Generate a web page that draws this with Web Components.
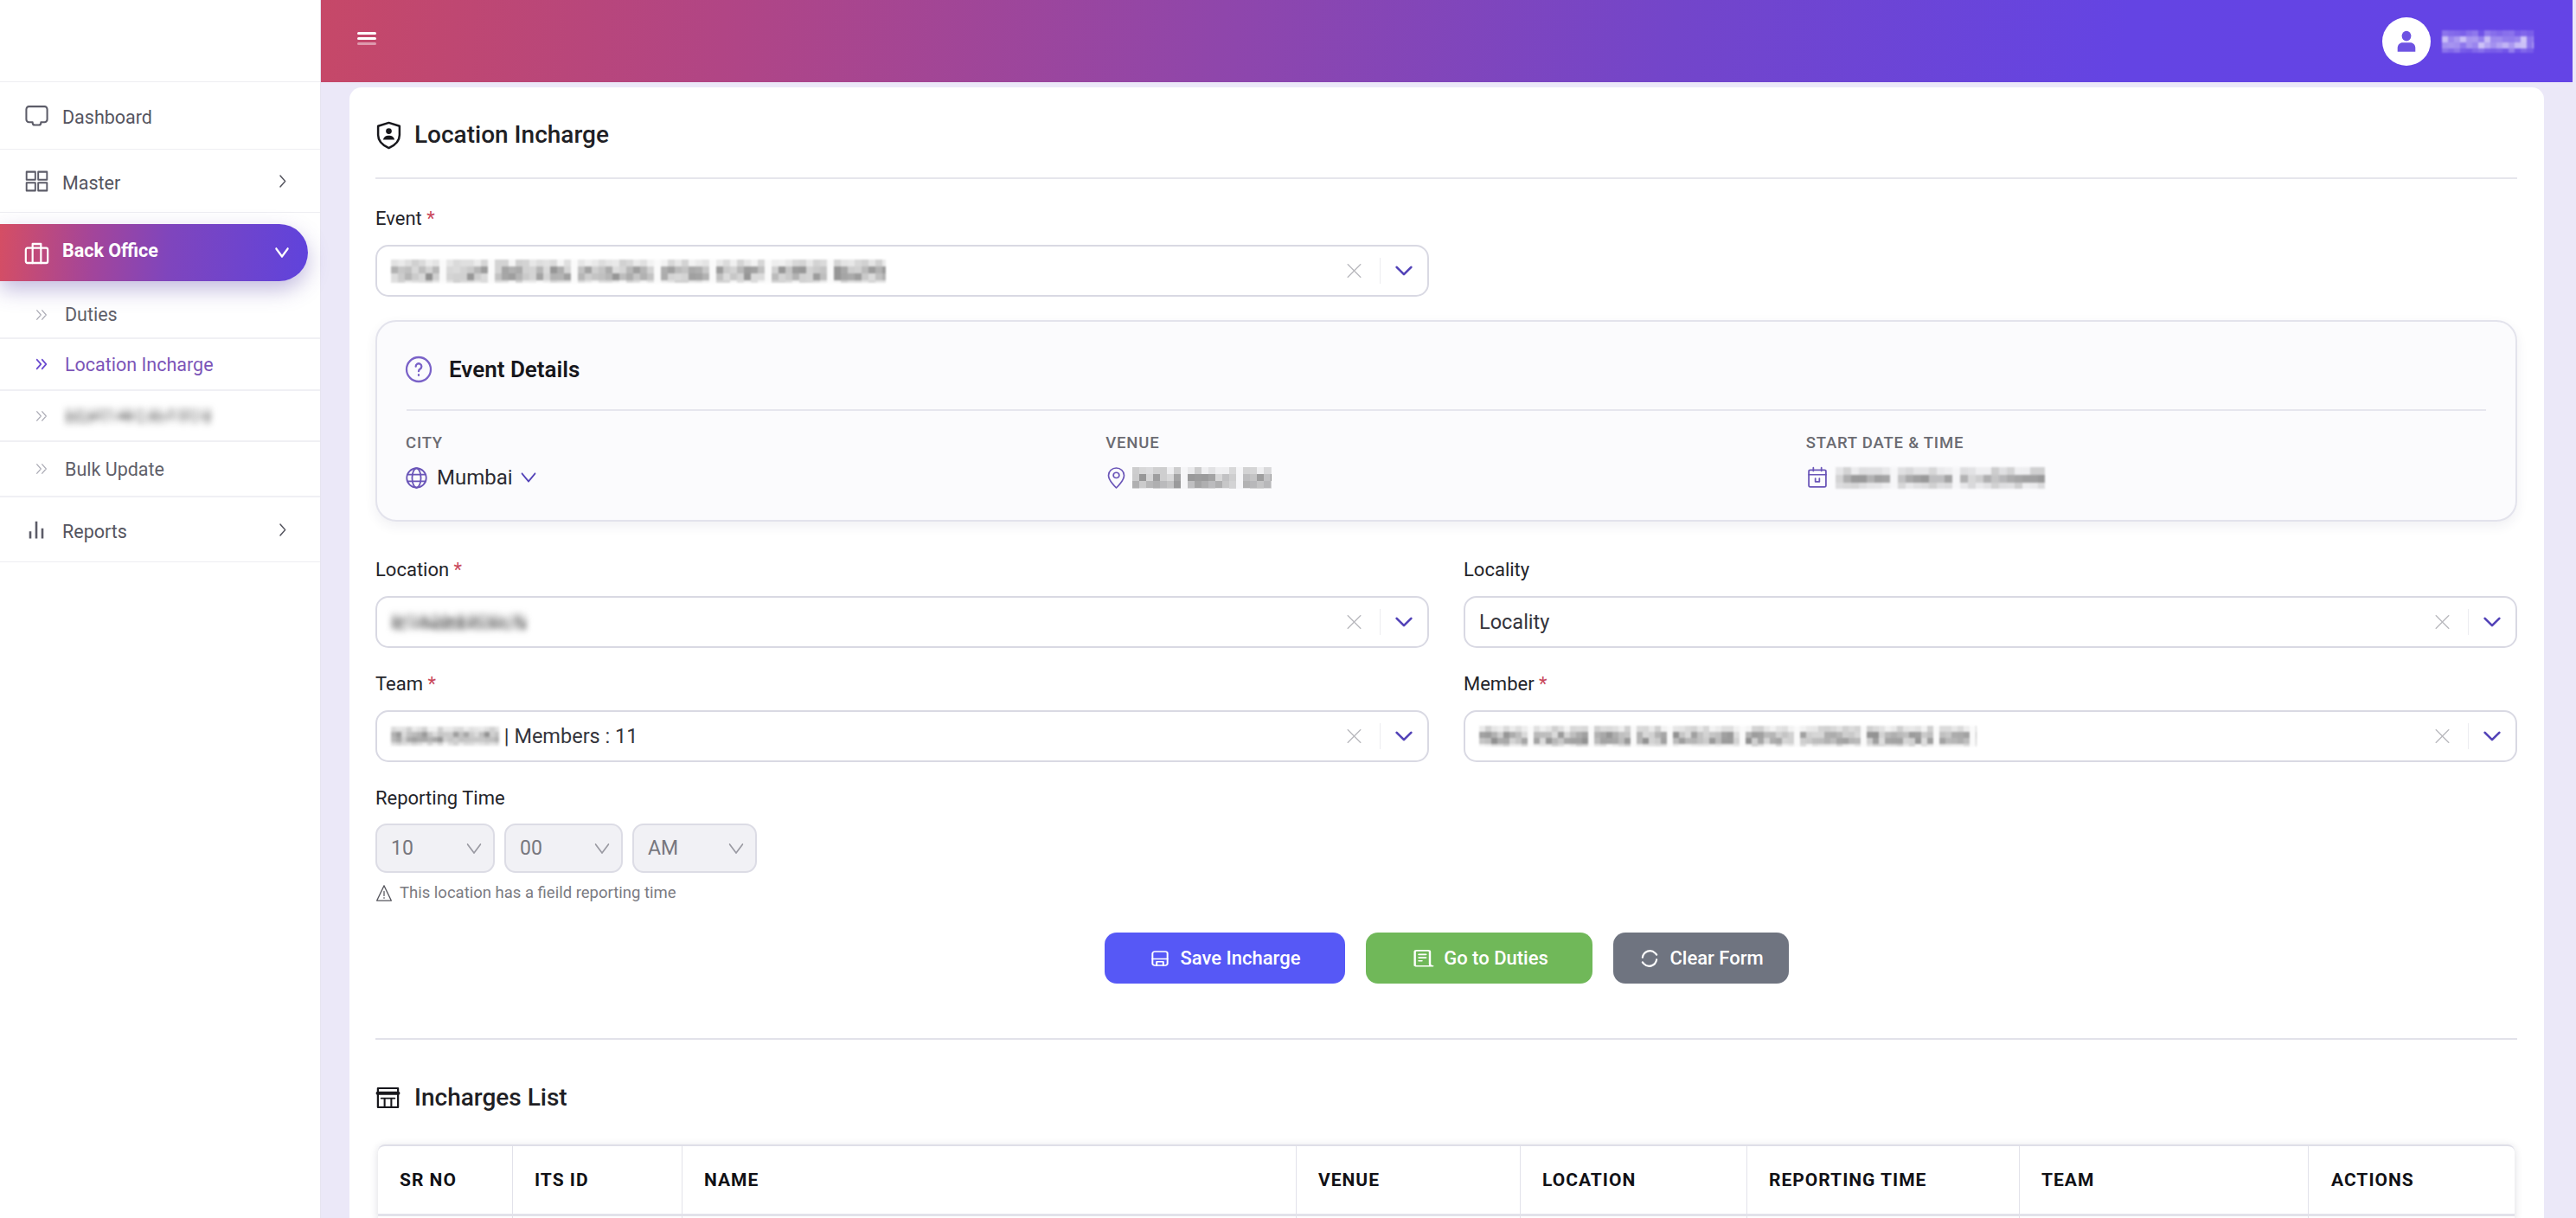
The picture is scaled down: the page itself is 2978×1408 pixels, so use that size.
<!DOCTYPE html>
<html>
<head>
<meta charset="utf-8">
<title>Location Incharge</title>
<style>
html, body { margin: 0; height: 100%; overflow: hidden; background: #ebe8f8; }
body { font-family: Roboto, "Liberation Sans", sans-serif; color: #1d1d22; }
</style>
</head>
<body>
<app-shell>
  <side-nav slot="side">
    <nav-row icon="dash" w="29" h="31" style="height:77px">Dashboard</nav-row>
    <nav-row icon="grid" w="27" h="29" arrow="right" style="height:72px">Master</nav-row>
    <nav-row icon="store" w="29" h="32" arrow="down" active>Back Office</nav-row>
    <sub-row style="height:53px;padding-top:12px">Duties</sub-row>
    <sub-row current style="height:58px">Location Incharge</sub-row>
    <sub-row style="height:57px"><redact-mark w="170" h="20" cell="7" soft="3" seed="11" peak=".4"></redact-mark></sub-row>
    <sub-row style="height:62px">Bulk Update</sub-row>
    <nav-row icon="bars" w="24" h="28" arrow="right" style="height:74px">Reports</nav-row>
  </side-nav>
  <top-bar slot="top"></top-bar>
  <form-card slot="main">
    <section-title icon="shield" w="35" h="35" gap="12" shift="-2">Location Incharge</section-title>
    <form-grid style="margin-top:33px">
      <select-field label="Event" required>
        <redact-mark w="572" h="27" cell="8" soft="1" seed="3" words></redact-mark>
      </select-field>
    </form-grid>
    <event-details>
      <redact-mark slot="venue" w="161" h="25" cell="8" soft="0.6" seed="7" words></redact-mark>
      <redact-mark slot="date" w="242" h="25" cell="9" soft="1.2" seed="5" words></redact-mark>
    </event-details>
    <form-grid>
      <select-field label="Location" required>
        <redact-mark w="157" h="22" cell="6" soft="3" seed="9"></redact-mark>
      </select-field>
      <select-field label="Locality"><span>Locality</span></select-field>
      <select-field label="Team" required>
        <redact-mark w="125" h="22" cell="6" soft="1.4" seed="13"></redact-mark><span>&nbsp;| Members : 11</span>
      </select-field>
      <select-field label="Member" required>
        <redact-mark w="575" h="24" cell="7" soft="1" seed="17" words></redact-mark>
      </select-field>
    </form-grid>
    <time-field></time-field>
    <button-row>
      <action-button icon="save" w="26" h="20" tone="#5658f6" style="width:278px;--gap:11px">Save Incharge</action-button>
      <action-button icon="doc" w="32" h="22" tone="#70b859" style="width:262px;--gap:8px">Go to Duties</action-button>
      <action-button icon="refresh" w="28" h="30" tone="#6f7480" style="width:203px;--gap:9px">Clear Form</action-button>
    </button-row>
    <section-title icon="table" w="31" h="28" gap="15" shift="-1" plain style="margin-top:63px;border-top:2px solid #e2e2ea;padding-top:42px">Incharges List</section-title>
    <data-table>
      <span>SR NO</span><span>ITS ID</span><span>NAME</span><span>VENUE</span><span>LOCATION</span><span>REPORTING TIME</span><span>TEAM</span><span>ACTIONS</span>
    </data-table>
  </form-card>
</app-shell>

<script>
const ICONS = {
    dash: '<path d="M4.500 4h15A2.500 2.500 0 0 1 22 6.500v9a2.500 2.500 0 0 1-2.500 2.500H16v.5a2 2 0 0 1-2 2h-4a2 2 0 0 1-2-2V18H4.500A2.500 2.500 0 0 1 2 15.500v-9A2.500 2.500 0 0 1 4.500 4z"/>',
    grid: '<rect x="1.500" y="3" width="9" height="7.500"/><rect x="13.500" y="3" width="9" height="7.500"/><rect x="1.500" y="13.500" width="9" height="7.500"/><rect x="13.500" y="13.500" width="9" height="7.500"/>',
    store: '<rect x="1.500" y="8" width="21" height="13" rx="1.500"/><path d="M8 21V4.500h8V21"/>',
    bars: '<path d="M5 21v-7M12 21V4M19 21v-10" stroke-width="2.600" stroke-linecap="butt"/>',
    right: '<path d="M8.500 4l8 8-8 8"/>',
    down: '<path d="M2 7l10 10 10-10"/>',
    twin: '<path d="M4 5l7 7-7 7M13 5l7 7-7 7"/>',
    shield: '<path d="M12 2l8.500 2.600v7c0 4.800-3.600 8.200-8.500 10.400-4.900-2.200-8.500-5.600-8.500-10.400v-7z"/><circle cx="12" cy="8.600" r="1.800" fill="currentColor" stroke-width="1"/><path d="M7.500 15.500c.5-2.500 2.300-3.300 4.500-3.300s4 .8 4.500 3.300z" fill="currentColor" stroke="none"/>',
    info: '<circle cx="12" cy="12" r="10.500"/><path d="M9.500 9.500a2.500 2.500 0 1 1 3.800 2.100c-.8.500-1.300 1-1.300 2"/><path d="M12 16.600v.6"/>',
    globe: '<circle cx="12" cy="12" r="10"/><ellipse cx="12" cy="12" rx="4.500" ry="10"/><path d="M2.500 8.500h19M2.500 15.500h19"/>',
    pin: '<path d="M12 23s-8-8-8-14a8 8 0 0 1 16 0c0 6-8 14-8 14z"/><circle cx="12" cy="9" r="3"/>',
    cal: '<rect x="3.500" y="4" width="17" height="18" rx="1.500"/><path d="M3.500 9h17M8 1.500V5M16 1.500V5M10 13v3.500h4V13"/>',
    cross: '<path d="M5 4l14 16M19 4L5 20"/>',
    warn: '<path d="M12 3L2 21h20z"/><path d="M12 10v5M12 17.500v.6"/>',
    save: '<rect x="4" y="2.500" width="16" height="19" rx="2.500"/><path d="M4 12.500h16M8.500 21.500v-5h7v5"/>',
    doc: '<path d="M5 21V3.500A1.500 1.500 0 0 1 6.500 2h10A1.500 1.500 0 0 1 18 3.500V19a2.500 2.500 0 0 0 2.500 2.500H6.500A1.500 1.500 0 0 1 5 20z"/><path d="M8.500 7h6M8.500 11h6M8.500 15h2.500"/>',
    refresh: '<path d="M5 11a7.500 7.500 0 0 1 12.500-4L19 8.500M19 13a7.500 7.500 0 0 1-12.500 4L5 15.500"/>',
    table: '<rect x="3" y="2.500" width="18" height="19"/><path d="M3 7.500h18" stroke-width="3.600"/><path d="M6 12.500h12M9 12.500V21M15 12.500V21" stroke-width="1.600"/>',
    user: '<circle cx="12" cy="6.500" r="5" fill="currentColor" stroke="none"/><path d="M2.500 22v-3.500c0-3.500 2.500-5.500 5.500-5.500h8c3 0 5.500 2 5.500 5.500V22z" fill="currentColor" stroke="none"/>'
};

class UiIcon extends HTMLElement {
    connectedCallback() {
        const size = this.getAttribute('size') || 24;
        const height = this.getAttribute('tall') || size;
        const stroke = this.getAttribute('stroke') || 2;
        this.attachShadow({mode: 'open'}).innerHTML = `
            <style>:host { display: inline-flex; flex: none; } svg { display: block; }</style>
            <svg width="${size}" height="${height}" viewBox="0 0 24 24" preserveAspectRatio="none" fill="none"
                 stroke="currentColor" stroke-width="${stroke}" stroke-linecap="round" stroke-linejoin="round">${ICONS[this.getAttribute('name')]}</svg>`;
    }
}

// mosaic standing in for the censored values of the reference
class RedactMark extends HTMLElement {
    connectedCallback() {
        const w = +this.getAttribute('w');
        const h = +this.getAttribute('h');
        const cell = +this.getAttribute('cell') || 8;
        const soft = this.getAttribute('soft') || 1;
        const tone = this.getAttribute('tone') || '#555';
        const peak = +this.getAttribute('peak') || 0.45;
        const words = this.hasAttribute('words');
        let seed = +this.getAttribute('seed') || 1;
        const next = () => {
            seed = (seed * 1103515245 + 12345) % 2147483648;
            return seed / 2147483648;
        };
        // columns left pale, so that a long value reads as separate words
        const pale = new Set();
        if(words) {
            let col = 5 + Math.floor(next() * 5);
            while(col * cell < w) {
                pale.add(col);
                col += 6 + Math.floor(next() * 8);
            }
        }
        let rects = '';
        for(let y = 0; y < h; y += cell) {
            const middle = y >= cell && y < h - cell;
            for(let x = 0; x < w; x += cell) {
                let alpha = (middle ? 0.2 : 0.06) + next() * peak * (middle ? 1 : 0.5);
                if(pale.has(x / cell)) {
                    alpha = 0.03;
                }
                rects += `<rect x="${x}" y="${y}" width="${cell}" height="${cell}" fill="${tone}" opacity="${alpha.toFixed(2)}"/>`;
            }
        }
        this.attachShadow({mode: 'open'}).innerHTML = `
            <style>:host { display: inline-flex; flex: none; } svg { display: block; filter: blur(${soft}px); }</style>
            <svg width="${w}" height="${h}" viewBox="0 0 ${w} ${h}" shape-rendering="crispEdges">${rects}</svg>`;
    }
}

const shellTemplate = document.createElement('template');
shellTemplate.innerHTML = `
<style>
:host { display: grid; grid-template-columns: 371px 1fr; grid-template-rows: 95px 1fr; height: 100vh; overflow: hidden; }
.side { grid-row: 1 / 3; box-sizing: border-box; background: #fff; border-right: 1px solid #e6e4f0; position: relative; z-index: 1; }
.top { padding-right: 4px; }
.main { padding: 6px 37px 0 33px; min-height: 0; overflow: hidden; }
</style>
<div class="side"><slot name="side"></slot></div>
<div class="top"><slot name="top"></slot></div>
<div class="main"><slot name="main"></slot></div>`;

class AppShell extends HTMLElement {
    connectedCallback() {
        this.attachShadow({mode: 'open'}).appendChild(shellTemplate.content.cloneNode(true));
    }
}

class SideNav extends HTMLElement {
    connectedCallback() {
        this.attachShadow({mode: 'open'}).innerHTML = `
            <style>
            :host { display: flex; flex-direction: column; padding-top: 94px; }
            .line { border-top: 1px solid #eeeef2; }
            ::slotted(*) { flex: none; }
            </style>
            <div class="line"></div><slot></slot>`;
    }
}

class NavRow extends HTMLElement {
    connectedCallback() {
        const active = this.hasAttribute('active');
        const arrow = this.getAttribute('arrow');
        const down = arrow === 'down';
        this.attachShadow({mode: 'open'}).innerHTML = `
            <style>
            :host { display: flex; align-items: center; font-size: 21.500px; color: #55555f; border-bottom: 1px solid #eeeef2; padding: 0 35px 0 30px; gap: 18px; }
            :host([active]) { height: 66px; margin: 13px 14px 0 0; border: 0; border-radius: 0 33px 33px 0; color: #fff; font-weight: 700; padding-right: 22px;
                background: linear-gradient(94deg, #d54e64 0%, #a3459a 30%, #7f45bd 55%, #5f43dc 100%);
                box-shadow: 0 10px 24px rgba(80, 60, 160, .34); }
            :host([active]) span { margin-top: -5px; }
            .mark { display: flex; justify-content: center; align-items: center; width: 24px; color: ${active ? '#fff' : '#5c5c68'}; }
            span { flex: 1; margin-top: 4px; }
            .arrow { color: ${active ? '#fff' : '#55555f'}; }
            </style>
            <div class="mark"><ui-icon name="${this.getAttribute('icon')}" size="${this.getAttribute('w')}" tall="${this.getAttribute('h')}" stroke="${active ? 1.800 : 1.700}"></ui-icon></div>
            <span><slot></slot></span>
            ${arrow ? `<ui-icon class="arrow" name="${arrow}" size="${down ? 16 : 17}" tall="${down ? 22 : 19}" stroke="${down ? 3 : 2}"></ui-icon>` : ''}`;
    }
}

class SubRow extends HTMLElement {
    connectedCallback() {
        const current = this.hasAttribute('current');
        this.attachShadow({mode: 'open'}).innerHTML = `
            <style>
            :host { display: flex; align-items: center; font-size: 21.500px; color: #5f5f69; border-bottom: 2px solid #f0f0f4; padding-left: 40px; gap: 19px; }
            :host([current]) { color: #7c55b8; }
            ui-icon { color: ${current ? '#6a4bd0' : '#aaaab4'}; }
            </style>
            <ui-icon name="twin" size="16" tall="18" stroke="${current ? 2.400 : 1.600}"></ui-icon>
            <slot></slot>`;
    }
}

class TopBar extends HTMLElement {
    connectedCallback() {
        this.attachShadow({mode: 'open'}).innerHTML = `
            <style>
            :host { display: flex; align-items: center; justify-content: space-between; height: 95px; box-sizing: border-box; padding: 0 45px 0 42px;
                background: linear-gradient(97deg, #c64868 0%, #b14585 18%, #8f46ab 40%, #7345ca 60%, #6444e3 80%, #6444e6 100%); }
            .burger { display: flex; flex-direction: column; gap: 3.500px; width: 22px; margin-top: -6px; }
            .burger i { display: block; height: 2.500px; background: #fff; border-radius: 2px; }
            .burger i:last-child { opacity: .45; }
            .who { display: flex; align-items: center; gap: 13px; }
            .face { width: 56px; height: 56px; border-radius: 50%; background: #fff; display: flex; align-items: center; justify-content: center; color: #6d52e2; }
            </style>
            <div class="burger"><i></i><i></i><i></i></div>
            <div class="who">
                <div class="face"><ui-icon name="user" size="26" tall="28"></ui-icon></div>
                <redact-mark w="106" h="26" cell="7" soft="1" tone="#fff" peak=".5" seed="21"></redact-mark>
            </div>`;
    }
}

class FormCard extends HTMLElement {
    connectedCallback() {
        this.attachShadow({mode: 'open'}).innerHTML = `
            <style>
            :host { display: block; background: #fff; border-radius: 14px 14px 0 0; padding: 30px 31px 0 30px; height: 1400px; box-sizing: border-box; }
            </style>
            <slot></slot>`;
    }
}

class SectionTitle extends HTMLElement {
    connectedCallback() {
        this.attachShadow({mode: 'open'}).innerHTML = `
            <style>
            :host { display: flex; align-items: center; gap: ${this.getAttribute('gap')}px; font-size: 28px; line-height: 50px; font-weight: 500; color: #1f1f25; padding-bottom: 24px; border-bottom: 2px solid #e6e6ec; }
            :host([plain]) { padding-bottom: 0; border-bottom: 0; }
            ui-icon { margin-left: ${this.getAttribute('shift')}px; color: #17171c; }
            </style>
            <ui-icon name="${this.getAttribute('icon')}" size="${this.getAttribute('w')}" tall="${this.getAttribute('h')}" stroke="1.700"></ui-icon>
            <slot></slot>`;
    }
}

class FormGrid extends HTMLElement {
    connectedCallback() {
        this.attachShadow({mode: 'open'}).innerHTML = `
            <style>:host { display: grid; grid-template-columns: 1218px 1218px; column-gap: 40px; row-gap: 29px; }</style>
            <slot></slot>`;
    }
}

class SelectField extends HTMLElement {
    connectedCallback() {
        const star = this.hasAttribute('required') ? '<b>*</b>' : '';
        this.attachShadow({mode: 'open'}).innerHTML = `
            <style>
            :host { display: block; font-size: 22px; }
            label { display: block; line-height: 26px; margin-bottom: 17px; color: #24242a; }
            b { color: #c9485b; font-weight: 400; }
            .box { display: flex; align-items: center; height: 60px; box-sizing: border-box; border: 2px solid #d9d9e3; border-radius: 15px; background: #fff; padding-left: 16px; font-size: 23.500px; color: #35353c; }
            .value { flex: 1; display: flex; align-items: center; min-width: 0; }
            .clear { color: #b8b8bd; margin-right: 17px; }
            .sep { width: 1px; height: 30px; background: #ececf0; }
            .open { color: #5343b8; margin: 0 17px 0 17px; }
            </style>
            <label>${this.getAttribute('label')} ${star}</label>
            <div class="box">
                <div class="value"><slot></slot></div>
                <ui-icon class="clear" name="cross" size="25" tall="22" stroke="1.500"></ui-icon>
                <div class="sep"></div>
                <ui-icon class="open" name="down" size="20" tall="20" stroke="3.200"></ui-icon>
            </div>`;
    }
}

class EventDetails extends HTMLElement {
    connectedCallback() {
        this.attachShadow({mode: 'open'}).innerHTML = `
            <style>
            :host { display: block; margin: 27px 0 43px; height: 233px; box-sizing: border-box; border: 2px solid #e3e3ec; border-radius: 24px; background: #fbfbfd; padding: 35px 34px 0; box-shadow: 0 5px 14px rgba(40, 40, 80, .07); }
            .head { display: flex; align-items: center; gap: 19px; font-size: 26px; font-weight: 600; line-height: 40px; color: #17171c; padding-bottom: 26px; border-bottom: 2px solid #e6e6ee; }
            .cols { display: grid; grid-template-columns: repeat(3, 1fr); column-gap: 24px; margin-top: 26px; }
            h4 { margin: 0 0 14px -1px; font-size: 18.500px; line-height: 22px; font-weight: 500; letter-spacing: .8px; color: #6b6b72; }
            .val { display: flex; align-items: center; height: 30px; font-size: 24px; color: #2b2b32; }
            ui-icon { color: #6a55b8; }
            .info { margin-left: -2px; color: #7a62c8; }
            .globe { margin: 0 10px 0 -2px; }
            .pick { margin-left: 9px; color: #5343b8; }
            .pin { margin: 0 5px 0 -2px; }
            .cal { margin: 0 7px 0 -2px; }
            </style>
            <div class="head"><ui-icon class="info" name="info" size="32" tall="32" stroke="1.700"></ui-icon>Event Details</div>
            <div class="cols">
                <div><h4>CITY</h4><div class="val"><ui-icon class="globe" name="globe" size="27" stroke="1.600"></ui-icon>Mumbai<ui-icon class="pick" name="down" size="18" tall="22" stroke="2.200"></ui-icon></div></div>
                <div><h4>VENUE</h4><div class="val"><ui-icon class="pin" name="pin" size="27" tall="25" stroke="1.500"></ui-icon><slot name="venue"></slot></div></div>
                <div><h4>START DATE &amp; TIME</h4><div class="val"><ui-icon class="cal" name="cal" size="28" tall="26" stroke="1.500"></ui-icon><slot name="date"></slot></div></div>
            </div>`;
    }
}

class TimeBox extends HTMLElement {
    connectedCallback() {
        this.attachShadow({mode: 'open'}).innerHTML = `
            <style>
            :host { display: flex; align-items: center; justify-content: space-between; box-sizing: border-box; height: 57px; border: 2px solid #dcdce5; border-radius: 13px; background: #f1f1f5; padding: 0 13px 0 16px; font-size: 23px; color: #77777e; }
            ui-icon { color: #9a9aa2; }
            </style>
            <slot></slot><ui-icon name="down" size="18" tall="24" stroke="1.800"></ui-icon>`;
    }
}

class TimeField extends HTMLElement {
    connectedCallback() {
        this.attachShadow({mode: 'open'}).innerHTML = `
            <style>
            :host { display: block; margin-top: 29px; }
            label { display: block; font-size: 22px; line-height: 26px; margin-bottom: 16px; color: #24242a; }
            .boxes { display: flex; gap: 11px; }
            .hint { display: flex; align-items: center; gap: 8px; margin-top: 11px; font-size: 18.500px; line-height: 24px; color: #7b7b82; }
            ui-icon { color: #55555c; }
            </style>
            <label>Reporting Time</label>
            <div class="boxes">
                <time-box style="width:138px">10</time-box>
                <time-box style="width:137px">00</time-box>
                <time-box style="width:144px">AM</time-box>
            </div>
            <div class="hint"><ui-icon name="warn" size="20" tall="23" stroke="1.500"></ui-icon>This location has a fieild reporting time</div>`;
    }
}

class ButtonRow extends HTMLElement {
    connectedCallback() {
        this.attachShadow({mode: 'open'}).innerHTML = `
            <style>:host { display: flex; justify-content: center; gap: 24px; margin-top: 34px; }</style>
            <slot></slot>`;
    }
}

class ActionButton extends HTMLElement {
    connectedCallback() {
        this.attachShadow({mode: 'open'}).innerHTML = `
            <style>
            :host { display: flex; align-items: center; justify-content: center; gap: var(--gap, 10px); height: 59px; box-sizing: border-box; border-radius: 14px; color: #fff; font-size: 22px; font-weight: 500; background: ${this.getAttribute('tone')}; }
            </style>
            <ui-icon name="${this.getAttribute('icon')}" size="${this.getAttribute('w')}" tall="${this.getAttribute('h')}" stroke="1.800"></ui-icon>
            <slot></slot>`;
    }
}

class DataTable extends HTMLElement {
    connectedCallback() {
        this.attachShadow({mode: 'open'}).innerHTML = `
            <style>
            :host { display: grid; grid-template-columns: 156px 196px 710px 259px 262px 315px 334px 238px; margin: 29px 3px 0; border-top: 2px solid #dfdfe8; border-radius: 8px 8px 0 0; box-shadow: 0 2px 10px rgba(30, 30, 60, .16); background: #fff; }
            ::slotted(span) { display: flex; align-items: center; height: 84px; box-sizing: border-box; padding: 0 0 6px 25px; font-size: 21px; font-weight: 700; letter-spacing: 1px; color: #111116; border-right: 1px solid #e2e2ea; background: linear-gradient(#e2e2ea, #e2e2ea) 0 78px / 100% 3px no-repeat; }
            ::slotted(span:last-child) { border-right: 0; padding-left: 26px; }
            </style>
            <slot></slot>`;
    }
}

customElements.define('ui-icon', UiIcon);
customElements.define('redact-mark', RedactMark);
customElements.define('app-shell', AppShell);
customElements.define('side-nav', SideNav);
customElements.define('nav-row', NavRow);
customElements.define('sub-row', SubRow);
customElements.define('top-bar', TopBar);
customElements.define('form-card', FormCard);
customElements.define('section-title', SectionTitle);
customElements.define('form-grid', FormGrid);
customElements.define('select-field', SelectField);
customElements.define('event-details', EventDetails);
customElements.define('time-box', TimeBox);
customElements.define('time-field', TimeField);
customElements.define('button-row', ButtonRow);
customElements.define('action-button', ActionButton);
customElements.define('data-table', DataTable);
</script>
</body>
</html>
